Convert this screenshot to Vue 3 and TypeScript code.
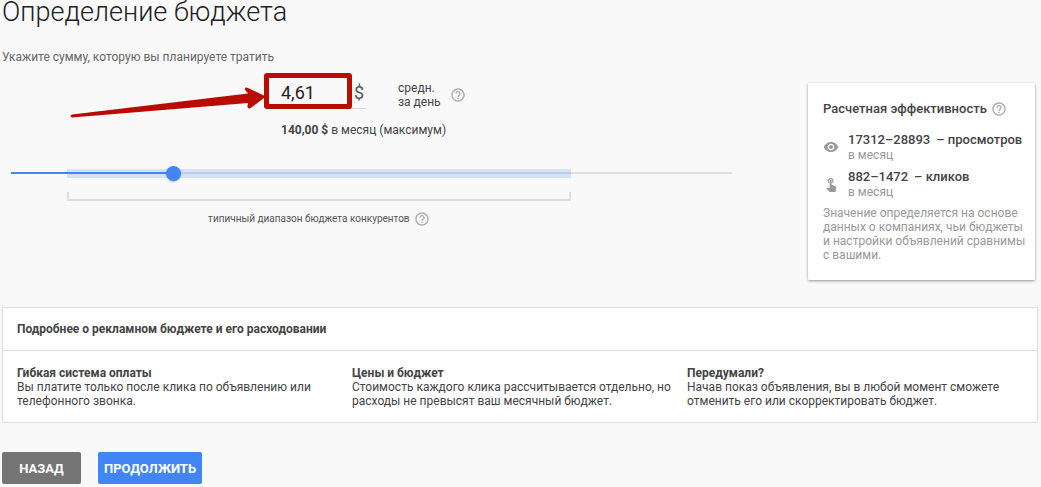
<script setup lang="ts">
import { computed, ref } from 'vue'

interface Topic {
  title: string
  text: string
}

const amount = ref('4,61')
const position = ref(219)
const max = 1000
const competitors = { from: 77, to: 777 }

const share = (value: number) => `${(value / max) * 100}%`
const fillStyle = computed(() => ({ width: share(position.value) }))
const rangeStyle = {
  left: share(competitors.from),
  width: share(competitors.to - competitors.from),
}
const bracketStyle = {
  marginLeft: share(competitors.from),
  width: share(competitors.to - competitors.from),
}

const topics: Topic[] = [
  {
    title: 'Гибкая система оплаты',
    text: 'Вы платите только после клика по объявлению или телефонного звонка.',
  },
  {
    title: 'Цены и бюджет',
    text: 'Стоимость каждого клика рассчитывается отдельно, но расходы не превысят ваш месячный бюджет.',
  },
  {
    title: 'Передумали?',
    text: 'Начав показ объявления, вы в любой момент сможете отменить его или скорректировать бюджет.',
  },
]
</script>

<template>
  <main class="page">
    <svg class="symbols" aria-hidden="true">
      <symbol id="help" viewBox="0 0 24 24">
        <path d="M11 18h2v-2h-2v2zm1-16C6.48 2 2 6.48 2 12s4.480 10 10 10 10-4.480 10-10S17.520 2 12 2zm0 18c-4.410 0-8-3.590-8-8s3.590-8 8-8 8 3.590 8 8-3.590 8-8 8zm0-14c-2.210 0-4 1.790-4 4h2c0-1.100.9-2 2-2s2 .9 2 2c0 2-3 1.750-3 5h2c0-2.250 3-2.500 3-5 0-2.210-1.790-4-4-4z" />
      </symbol>
    </svg>

    <h1>Определение бюджета</h1>

    <div class="top">
      <section class="budget">
        <label class="lead" for="amount">Укажите сумму, которую вы планируете тратить</label>

        <div class="amount-row">
          <div class="field">
            <input id="amount" v-model="amount" type="text" inputmode="decimal" />
            <span class="currency">$</span>
            <span class="frame"></span>
            <svg class="arrow" viewBox="0 0 200 40" aria-hidden="true">
              <path d="M4 31.500 L180 10.500 L177 6.500 Q176.500 3.500 180 5 L198 13.500 L182 25.500 Q179 26 179.500 23 L180 20 L4 34.500 Q1 33 4 31.500Z" />
            </svg>
          </div>
          <span class="period">средн.<br />за день</span>
          <button class="help" type="button" aria-label="Справка о среднем бюджете">
            <svg><use href="#help" /></svg>
          </button>
        </div>

        <p class="monthly"><strong>140,00 $</strong> в месяц (максимум)</p>

        <div class="slider-area">
          <div class="slider">
            <span class="rail"></span>
            <span class="band" :style="rangeStyle"></span>
            <span class="fill" :style="fillStyle"></span>
            <input v-model.number="position" type="range" min="0" :max="max" aria-label="Бюджет" />
          </div>
          <div class="bracket-group" :style="bracketStyle">
            <div class="bracket"></div>
            <div class="typical">
              <span>типичный диапазон бюджета конкурентов</span>
              <button class="help" type="button" aria-label="Справка о диапазоне">
                <svg><use href="#help" /></svg>
              </button>
            </div>
          </div>
        </div>
      </section>

      <aside class="card">
        <h2>
          Расчетная эффективность
          <button class="help" type="button" aria-label="Справка об эффективности">
            <svg><use href="#help" /></svg>
          </button>
        </h2>
        <div class="metric">
          <svg viewBox="0 0 24 24" aria-hidden="true">
            <path d="M12 4.500C7 4.500 2.730 7.610 1 12c1.730 4.390 6 7.500 11 7.500s9.270-3.110 11-7.500c-1.730-4.390-6-7.500-11-7.500zM12 17c-2.760 0-5-2.240-5-5s2.240-5 5-5 5 2.240 5 5-2.240 5-5 5zm0-8c-1.660 0-3 1.340-3 3s1.340 3 3 3 3-1.340 3-3-1.340-3-3-3z" />
          </svg>
          <div>
            <b>17312–28893<span>– просмотров</span></b>
            <small>в месяц</small>
          </div>
        </div>
        <div class="metric">
          <svg viewBox="0 0 24 24" aria-hidden="true">
            <path d="M9 11.240V7.500C9 6.120 10.120 5 11.500 5S14 6.120 14 7.500v3.740c1.210-.81 2-2.180 2-3.740C16 5.010 13.990 3 11.500 3S7 5.010 7 7.500c0 1.560.79 2.930 2 3.740zm9.840 4.630l-4.540-2.260c-.17-.07-.35-.11-.54-.11H13v-6c0-.83-.67-1.500-1.500-1.500S10 6.670 10 7.500v10.740l-3.430-.72c-.08-.01-.15-.03-.24-.03-.31 0-.59.13-.79.33l-.79.8 4.940 4.940c.27.27.65.44 1.060.44h6.790c.75 0 1.330-.55 1.440-1.280l.75-5.270c.01-.07.02-.14.02-.2 0-.62-.38-1.160-.91-1.380z" />
          </svg>
          <div>
            <b>882–1472<span>– кликов</span></b>
            <small>в месяц</small>
          </div>
        </div>
        <p>Значение определяется на основе данных о компаниях, чьи бюджеты и настройки объявлений сравнимы с вашими.</p>
      </aside>
    </div>

    <section class="details">
      <h2>Подробнее о рекламном бюджете и его расходовании</h2>
      <div class="topics">
        <article v-for="topic in topics" :key="topic.title">
          <h3>{{ topic.title }}</h3>
          <p>{{ topic.text }}</p>
        </article>
      </div>
    </section>

    <div class="actions">
      <button class="back" type="button">НАЗАД</button>
      <button class="next" type="button">ПРОДОЛЖИТЬ</button>
    </div>
  </main>
</template>

<style>
body {
  background: #f9f9f9;
}
</style>

<style scoped>
.page {
  padding: 0 3px 0 2px;
  color: #444;
  font: 12px/14px Roboto, "Noto Sans", sans-serif;
}
.page * {
  box-sizing: border-box;
}
h1, h2, h3, p {
  margin: 0;
}
button, input {
  font-family: inherit;
}
.symbols {
  position: absolute;
  width: 0;
  height: 0;
}
h1 {
  color: #222;
  font-size: 27px;
  font-weight: 300;
  line-height: 24px;
}
.top {
  display: grid;
  grid-template-columns: minmax(0, 1fr) 227px;
  column-gap: 76px;
  padding: 26px 3px 0 0;
}
.lead {
  display: block;
  color: #666;
}
.amount-row {
  display: flex;
  align-items: center;
  height: 36px;
  margin: 9px 0 0 279px;
}
.field {
  position: relative;
  display: flex;
  align-items: center;
  width: 85px;
  height: 36px;
  padding-top: 4px;
  border-bottom: 1px solid #d8d8d8;
  font-size: 18px;
}
.field input {
  width: 73px;
  height: 30px;
  padding: 0;
  border: 0;
  outline: 0;
  background: none;
  color: #222;
  font-size: 18px;
}
.currency {
  color: #555;
}
.frame {
  position: absolute;
  inset: 0 14px -1px -17px;
  border: 5px solid #b80c00;
  border-radius: 3px;
  pointer-events: none;
}
.arrow {
  position: absolute;
  top: 10px;
  right: 98px;
  width: 200px;
  height: 40px;
  fill: #b80c00;
  pointer-events: none;
}
.period {
  width: 42px;
  margin: 8px 0 0 32px;
  white-space: nowrap;
}
.help {
  flex: none;
  width: 16px;
  height: 16px;
  padding: 0;
  border: 0;
  background: none;
  line-height: 0;
  cursor: pointer;
}
.help svg {
  width: 16px;
  height: 16px;
  fill: #aaa;
}
.amount-row .help {
  margin: 8px 0 0 10px;
}
.monthly {
  margin: 14px 0 0 279px;
}
.monthly strong {
  font-weight: 700;
}
.slider-area {
  margin: 28px 0 0 9px;
}
.slider {
  position: relative;
  height: 16px;
}
.rail, .band, .fill {
  position: absolute;
  top: 7px;
  left: 0;
  height: 2px;
}
.rail {
  width: 100%;
  background: #dfdfdf;
}
.band {
  top: 4px;
  height: 9px;
  background: rgba(66, 133, 244, 0.2);
}
.fill {
  background: #4285f4;
}
.slider input {
  position: absolute;
  inset: 0;
  width: 100%;
  height: 16px;
  margin: 0;
  appearance: none;
  background: none;
}
.slider input::-webkit-slider-thumb {
  appearance: none;
  width: 15px;
  height: 15px;
  border-radius: 50%;
  background: #4285f4;
  box-shadow: 0 1px 2px rgba(0, 0, 0, 0.25);
}
.bracket-group {
  padding-top: 11px;
}
.bracket {
  height: 9px;
  border: 2px solid #dfdfdf;
  border-top: 0;
}
.typical {
  display: flex;
  align-items: center;
  justify-content: center;
  gap: 4px;
  margin-top: 10px;
  color: #555;
  font-size: 10px;
}
.card {
  align-self: start;
  margin-top: 33px;
  padding: 18px 15px;
  border-radius: 1px;
  background: #fff;
  box-shadow: 0 1px 3px rgba(0, 0, 0, 0.4);
  color: #999;
}
.card h2 {
  display: flex;
  align-items: center;
  gap: 4px;
  margin-bottom: 15px;
  color: #444;
  font-size: 13px;
  font-weight: 500;
  line-height: 16px;
  white-space: nowrap;
}
.metric {
  display: flex;
  align-items: center;
  gap: 9px;
  margin-bottom: 7px;
}
.metric svg {
  flex: none;
  width: 16px;
  height: 16px;
  fill: #999;
}
.metric b {
  display: block;
  color: #444;
  font-size: 13px;
  font-weight: 500;
  line-height: 16px;
  white-space: nowrap;
}
.metric b span {
  margin-left: 6px;
}
.metric small {
  display: block;
  font-size: 12px;
}
.card p {
  margin-right: -12px;
}
.details {
  margin-top: 27px;
  border: 1px solid #dfdfdf;
  background: #fff;
}
.details h2 {
  padding: 14px;
  border-bottom: 1px solid #dfdfdf;
  font-size: 12px;
  font-weight: 700;
  line-height: 14px;
}
.topics {
  display: grid;
  grid-template-columns: repeat(3, 1fr);
  column-gap: 12px;
  padding: 15px 27px 14px 14px;
}
.topics h3 {
  font-size: 12px;
  font-weight: 700;
}
.actions {
  display: flex;
  gap: 17px;
  margin-top: 29px;
}
.actions button {
  height: 32px;
  padding: 0 6px;
  border: 0;
  border-radius: 2px;
  color: #fff;
  font-size: 13px;
  font-weight: 700;
}
.actions .back {
  min-width: 79px;
  background: #757575;
}
.actions .next {
  background: #4285f4;
}
</style>
